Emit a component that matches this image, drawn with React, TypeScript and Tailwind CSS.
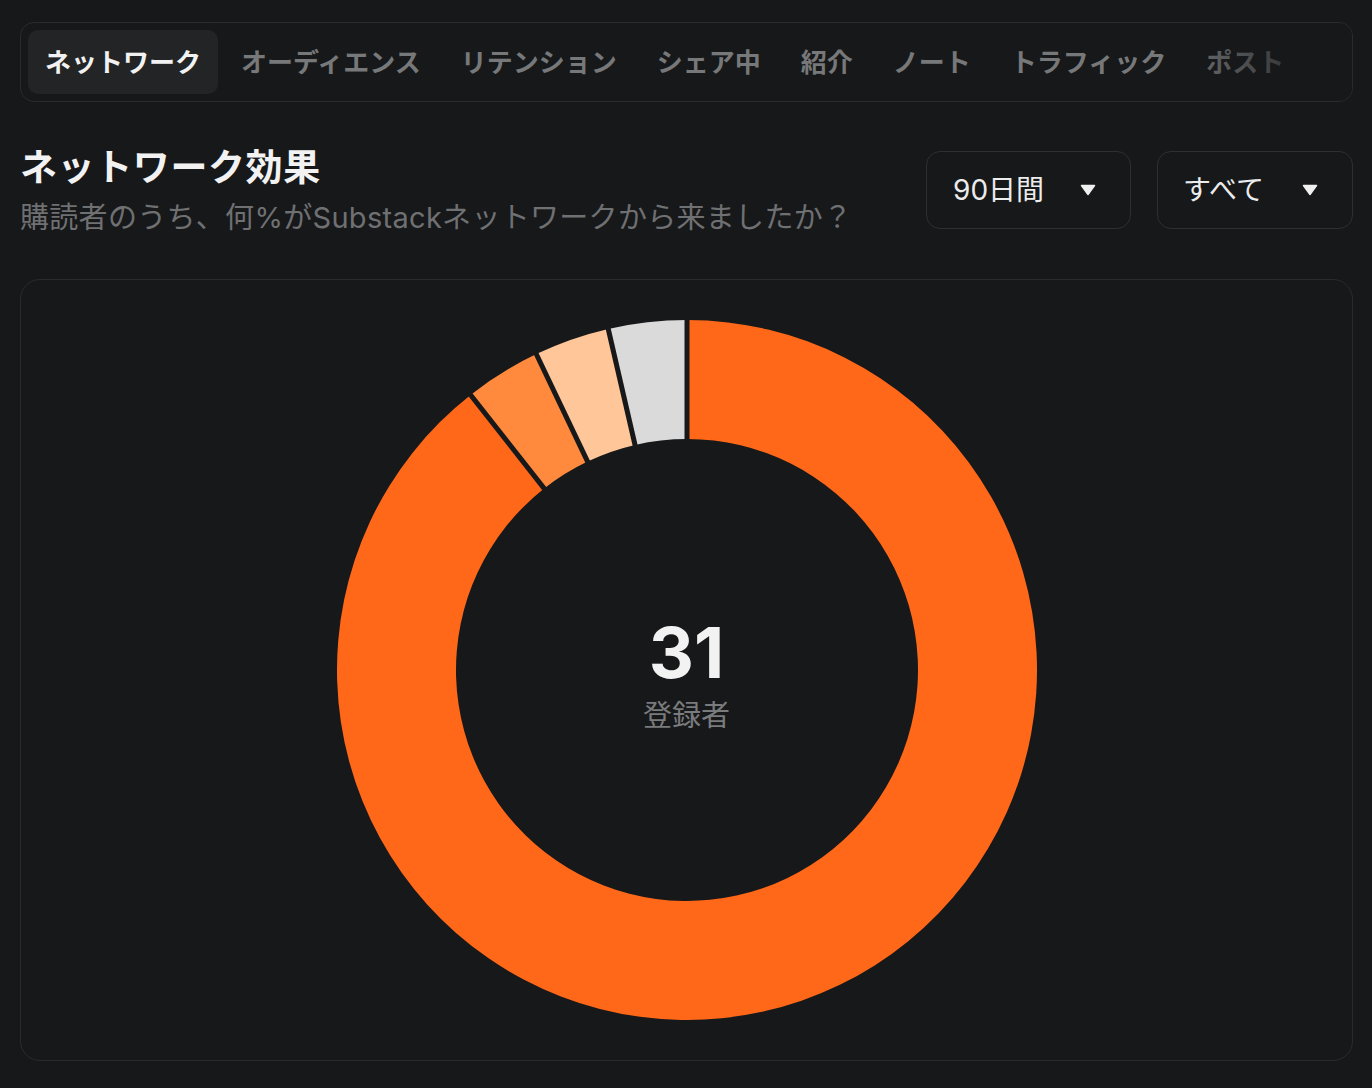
import React from 'react';

const tabs = ['ネットワーク', 'オーディエンス', 'リテンション', 'シェア中', '紹介', 'ノート', 'トラフィック', 'ポスト'];

const FONT = { fontFamily: 'Inter, "Noto Sans CJK JP", sans-serif' };

const segments = [
  { from: 0, to: 321.8, color: '#ff6719' },
  { from: 321.8, to: 334.5, color: '#ff8a3d' },
  { from: 334.5, to: 347, color: '#ffc699' },
  { from: 347, to: 360, color: '#dadada' },
];

const CX = 350;
const CY = 350;
const R = 350;
const r = 231;

function pt(rad: number, deg: number) {
  const a = (deg * Math.PI) / 180;
  return [CX + rad * Math.sin(a), CY - rad * Math.cos(a)];
}

function arcPath(from: number, to: number) {
  const large = to - from > 180 ? 1 : 0;
  const [x1, y1] = pt(R, from);
  const [x2, y2] = pt(R, to);
  const [x3, y3] = pt(r, to);
  const [x4, y4] = pt(r, from);
  return `M${x1} ${y1} A${R} ${R} 0 ${large} 1 ${x2} ${y2} L${x3} ${y3} A${r} ${r} 0 ${large} 0 ${x4} ${y4} Z`;
}

const Caret = () => (
  <svg width="16" height="12" viewBox="0 0 16 12">
    <path d="M1.5 1.5 H14.5 L8 10.5 Z" fill="#f0f0f0" stroke="#f0f0f0" strokeWidth="1.5" strokeLinejoin="round" />
  </svg>
);

const Donut = () => (
  <svg width="700" height="700" viewBox="0 0 700 700">
    {segments.map((s) => (
      <path key={s.from} d={arcPath(s.from, s.to)} fill={s.color} />
    ))}
    {segments.map((s) => {
      const [x1, y1] = pt(r - 4, s.from);
      const [x2, y2] = pt(R + 4, s.from);
      return <line key={'g' + s.from} x1={x1} y1={y1} x2={x2} y2={y2} stroke="#17181a" strokeWidth="5" />;
    })}
  </svg>
);

export default function App() {
  return (
    <div className="min-h-screen bg-[#17181a] pl-[20px] pr-[19px] pt-[22px] pb-[28px]" style={FONT}>
      {/* tab bar */}
      <div className="relative rounded-[14px] border border-[#2a2b2e] p-[7px] overflow-hidden">
        <div className="flex gap-[6px] whitespace-nowrap">
          {tabs.map((t, i) => (
            <div
              key={t}
              className={
                'h-16 px-[17px] flex items-center rounded-[10px] text-[26px] font-semibold ' +
                (i === 0 ? 'bg-[#222425] text-[#f2f2f2]' : 'text-[#777879]')
              }
            >
              {t}
            </div>
          ))}
        </div>
        <div className="pointer-events-none absolute inset-y-0 right-0 w-[190px] bg-linear-to-l from-[#17181a] to-transparent" />
      </div>

      {/* header */}
      <div className="mt-[44px] flex items-start justify-between">
        <div>
          <h1 className="text-[37px] leading-[44px] font-bold tracking-[0.6px] text-[#f2f2f2]">ネットワーク効果</h1>
          <p className="mt-[6px] text-[29px] leading-[44px] tracking-[0.3px] text-[#6f7072]">
            購読者のうち、何%がSubstackネットワークから来ましたか？
          </p>
        </div>
        <div className="mt-[5px] flex gap-[26px]">
          <button className="h-[78px] flex items-center gap-[36px] pl-[26px] pr-[34px] rounded-[14px] border border-[#2e2f32] text-[28px] text-[#ececec]">
            <span>90日間</span>
            <Caret />
          </button>
          <button className="h-[78px] flex items-center gap-[38px] pl-[25px] pr-[34px] rounded-[14px] border border-[#2e2f32] text-[28px] text-[#ececec]">
            <span>すべて</span>
            <Caret />
          </button>
        </div>
      </div>

      {/* chart card */}
      <div className="mt-[39px] rounded-[20px] border border-[#2a2b2e] py-[40px] flex justify-center">
        <div className="relative w-[700px] h-[700px]">
          <Donut />
          <div className="absolute inset-0 pt-[12px] flex flex-col items-center justify-center">
            <div className="text-[70px] leading-[68px] font-bold text-[#f2f2f2]">31</div>
            <div className="mt-[12px] text-[29px] leading-[34px] text-[#7a7b7d]">登録者</div>
          </div>
        </div>
      </div>
    </div>
  );
}
